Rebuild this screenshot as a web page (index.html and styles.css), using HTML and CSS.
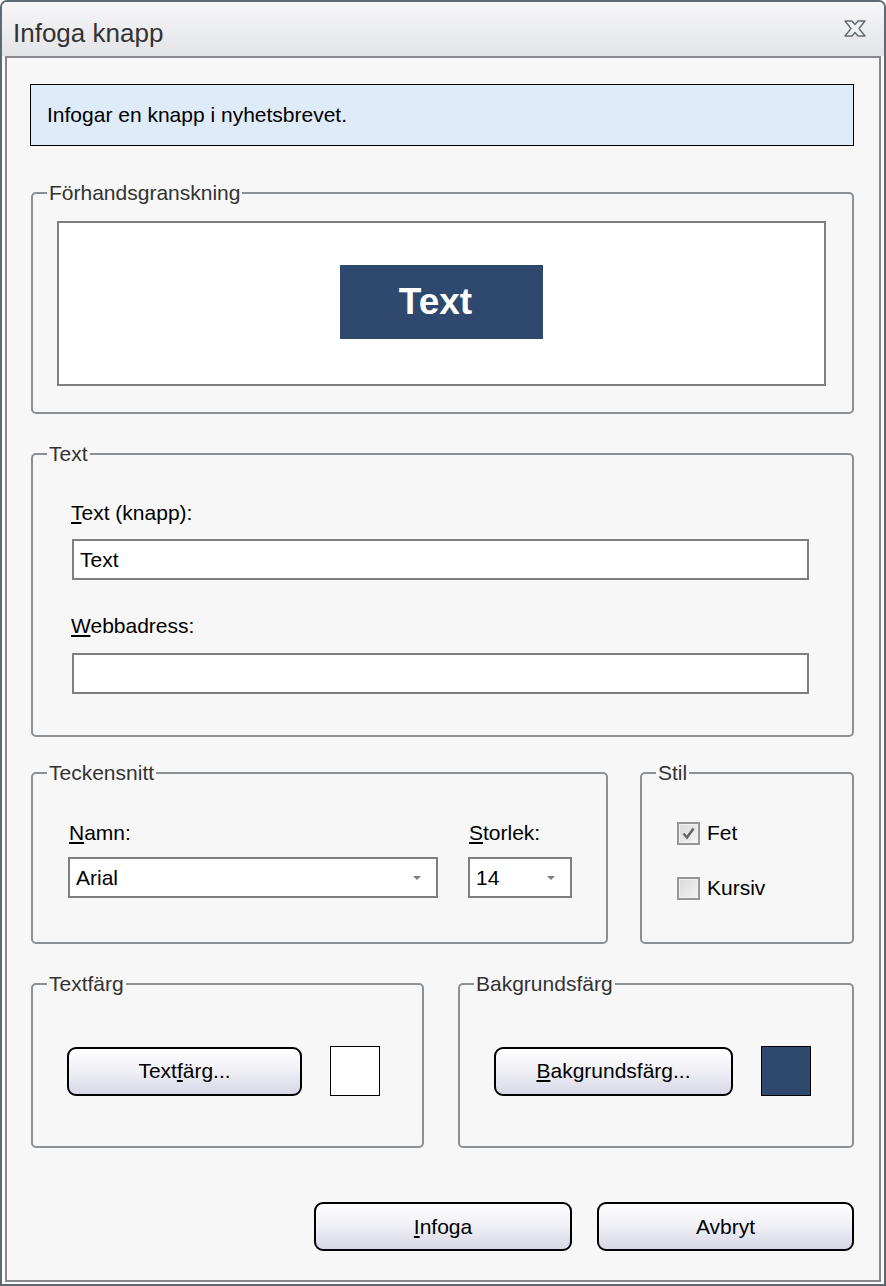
FILE: index.html
```html
<!DOCTYPE html>
<html lang="sv">
<head>
<meta charset="utf-8">
<title>Infoga knapp</title>
<link rel="stylesheet" href="styles.css">
</head>
<body>
<div class="window">
  <div class="titlebar">
    <div class="title">Infoga knapp</div>
    <svg class="close" width="22" height="17" viewBox="0 0 22 17">
      <polygon points="1,1 8,1 11,4.5 14,1 21,1 15,8.5 21,16 14,16 11,12.5 8,16 1,16 7,8.5" fill="#eef0f2" stroke="#62696f" stroke-width="1.4" stroke-linejoin="round"/>
    </svg>
  </div>
  <div class="client">
    <div class="info">Infogar en knapp i nyhetsbrevet.</div>

    <div class="group g-preview">
      <div class="legend">Förhandsgranskning</div>
      <div class="preview">
        <div class="preview-btn">Text</div>
      </div>
    </div>

    <div class="group g-text">
      <div class="legend">Text</div>
      <label class="label lbl-first"><u>T</u>ext (knapp):</label>
      <input class="field" type="text" value="Text">
      <label class="label lbl-second"><u>W</u>ebbadress:</label>
      <input class="field" type="text" value="">
    </div>

    <div class="row">
      <div class="group g-font">
        <div class="legend">Teckensnitt</div>
        <div class="font-cols">
          <div class="col col-name">
            <div class="label"><u>N</u>amn:</div>
            <div class="field select"><span class="sel-val">Arial</span><span class="arrow"></span></div>
          </div>
          <div class="col col-size">
            <div class="label"><u>S</u>torlek:</div>
            <div class="field select"><span class="sel-val">14</span><span class="arrow"></span></div>
          </div>
        </div>
      </div>
      <div class="group g-style">
        <div class="legend">Stil</div>
        <div class="cb-row cb-first">
          <span class="checkbox">
            <svg width="19" height="19" viewBox="0 0 19 19"><path d="M4.5 9.5 L8 13.5 L14.5 4.5" fill="none" stroke="#666" stroke-width="2.6"/></svg>
          </span>
          <span>Fet</span>
        </div>
        <div class="cb-row cb-second">
          <span class="checkbox"></span>
          <span>Kursiv</span>
        </div>
      </div>
    </div>

    <div class="row row-colors">
      <div class="group g-tcolor">
        <div class="legend">Textfärg</div>
        <div class="color-row">
          <button class="btn btn-tcolor">Text<u>f</u>ärg...</button>
          <span class="swatch swatch-white"></span>
        </div>
      </div>
      <div class="group g-bcolor">
        <div class="legend">Bakgrundsfärg</div>
        <div class="color-row">
          <button class="btn btn-bcolor"><u>B</u>akgrundsfärg...</button>
          <span class="swatch swatch-blue"></span>
        </div>
      </div>
    </div>

    <div class="footer">
      <button class="btn btn-ok"><u>I</u>nfoga</button>
      <button class="btn btn-cancel">Avbryt</button>
    </div>
  </div>
</div>
</body>
</html>
```
FILE: styles.css
```css
html, body {
  margin: 0;
  padding: 0;
}
body {
  font-family: "Liberation Sans", Arial, sans-serif;
  font-size: 21px;
  line-height: 24px;
  color: #000;
  background: #fff;
}
u {
  text-underline-offset: 2px;
}
.window {
  width: 886px;
  height: 1286px;
  box-sizing: border-box;
  border: 2px solid #5e6971;
  border-radius: 7px 7px 0 0;
  background: #fafafa;
  display: flex;
  flex-direction: column;
}
.titlebar {
  height: 54px;
  flex: none;
  box-sizing: border-box;
  padding: 8px 18px 0 11px;
  display: flex;
  align-items: center;
  background: linear-gradient(#f6f6f8, #e4e5e8);
  border-radius: 5px 5px 0 0;
}
.title {
  flex: 1;
  font-size: 26px;
  line-height: 30px;
  color: #333;
}
.close {
  align-self: flex-start;
  margin-top: 10px;
}
.client {
  flex: 1;
  margin: 0 3px 2px 3px;
  border: 2px solid #87898c;
  background: #f7f7f7;
  padding: 26px 25px 0 23px;
  display: flex;
  flex-direction: column;
}
.info {
  height: 62px;
  box-sizing: border-box;
  border: 1px solid #000;
  background: #dfebf9;
  display: flex;
  align-items: center;
  padding-left: 16px;
}
.group {
  --pl: 0px;
  border: 2px solid #8b9095;
  border-radius: 5px;
  margin-left: 1px;
  box-sizing: border-box;
}
.legend {
  margin: -13px 0 0 calc(14px - var(--pl));
  padding: 0 2px;
  width: fit-content;
  background: #f7f7f7;
  color: #333;
  line-height: 24px;
}
.g-preview {
  --pl: 24px;
  margin-top: 46px;
  padding: 0 26px 26px var(--pl);
}
.preview {
  margin-top: 16px;
  height: 165px;
  box-sizing: border-box;
  border: 2px solid #7f7f7f;
  background: #fff;
  display: flex;
  align-items: center;
  justify-content: center;
}
.preview-btn {
  width: 203px;
  height: 74px;
  margin-top: -4px;
  box-sizing: border-box;
  padding-right: 12px;
  background: #2e486e;
  color: #fff;
  font-weight: bold;
  font-size: 37px;
  line-height: 40px;
  display: flex;
  align-items: center;
  justify-content: center;
}
.g-text {
  --pl: 39px;
  margin-top: 39px;
  padding: 0 43px 41px var(--pl);
}
.label {
  display: block;
  margin-left: -1px;
}
.lbl-first {
  margin-top: 35px;
}
.lbl-second {
  margin-top: 34px;
}
.field {
  display: flex;
  align-items: center;
  width: 100%;
  height: 41px;
  box-sizing: border-box;
  border: 2px solid #7f7f7f;
  background: #fff;
  padding: 0 6px;
  margin: 14px 0 0 0;
  font: inherit;
  color: #000;
  outline: none;
}
.lbl-second + .field {
  margin-top: 15px;
}
.row {
  display: flex;
  gap: 31px;
  margin-top: 35px;
}
.g-font {
  --pl: 35px;
  width: 577px;
  flex: none;
  padding: 0 33px 44px var(--pl);
}
.font-cols {
  display: flex;
  gap: 30px;
  margin-top: 36px;
}
.col-name {
  width: 370px;
}
.col-size {
  width: 104px;
}
.col .label {
  margin-left: 1px;
}
.select {
  margin-top: 12px;
  padding-right: 15px;
}
.sel-val {
  flex: 1;
}
.arrow {
  width: 0;
  height: 0;
  border-left: 4px solid transparent;
  border-right: 4px solid transparent;
  border-top: 4px solid #7d7d7d;
  margin-top: 1px;
}
.g-style {
  --pl: 35px;
  flex: 1;
  padding: 0 0 0 var(--pl);
}
.cb-row {
  display: flex;
  align-items: center;
  height: 24px;
}
.cb-first {
  margin-top: 36px;
}
.cb-second {
  margin-top: 31px;
}
.checkbox {
  width: 23px;
  height: 23px;
  box-sizing: border-box;
  border: 2px solid #979797;
  background: linear-gradient(135deg, #d9d9d9, #f4f4f4);
  box-shadow: inset 0 0 0 1px #f2f2f2;
  margin-right: 7px;
  display: flex;
}
.row-colors {
  gap: 33px;
  margin-top: 39px;
}
.g-tcolor {
  --pl: 34px;
  width: 393px;
  flex: none;
  padding: 0 0 50px var(--pl);
}
.g-bcolor {
  --pl: 34px;
  flex: 1;
  padding: 0 0 50px var(--pl);
}
.color-row {
  display: flex;
  align-items: center;
  gap: 28px;
  margin-top: 50px;
}
.btn {
  height: 49px;
  box-sizing: border-box;
  border: 2px solid #000;
  border-radius: 9px;
  background: linear-gradient(#ffffff 0%, #f1f1f6 45%, #d8d8e7 100%);
  font: inherit;
  color: #000;
  padding: 0;
  display: flex;
  align-items: center;
  justify-content: center;
}
.btn-tcolor {
  width: 235px;
}
.btn-bcolor {
  width: 239px;
}
.swatch {
  width: 50px;
  height: 50px;
  box-sizing: border-box;
  border: 1px solid #000;
}
.swatch-white {
  background: #fff;
}
.swatch-blue {
  background: #2e486e;
}
.footer {
  display: flex;
  justify-content: flex-end;
  gap: 25px;
  margin-top: 54px;
}
.btn-ok {
  width: 258px;
}
.btn-cancel {
  width: 257px;
}
```
